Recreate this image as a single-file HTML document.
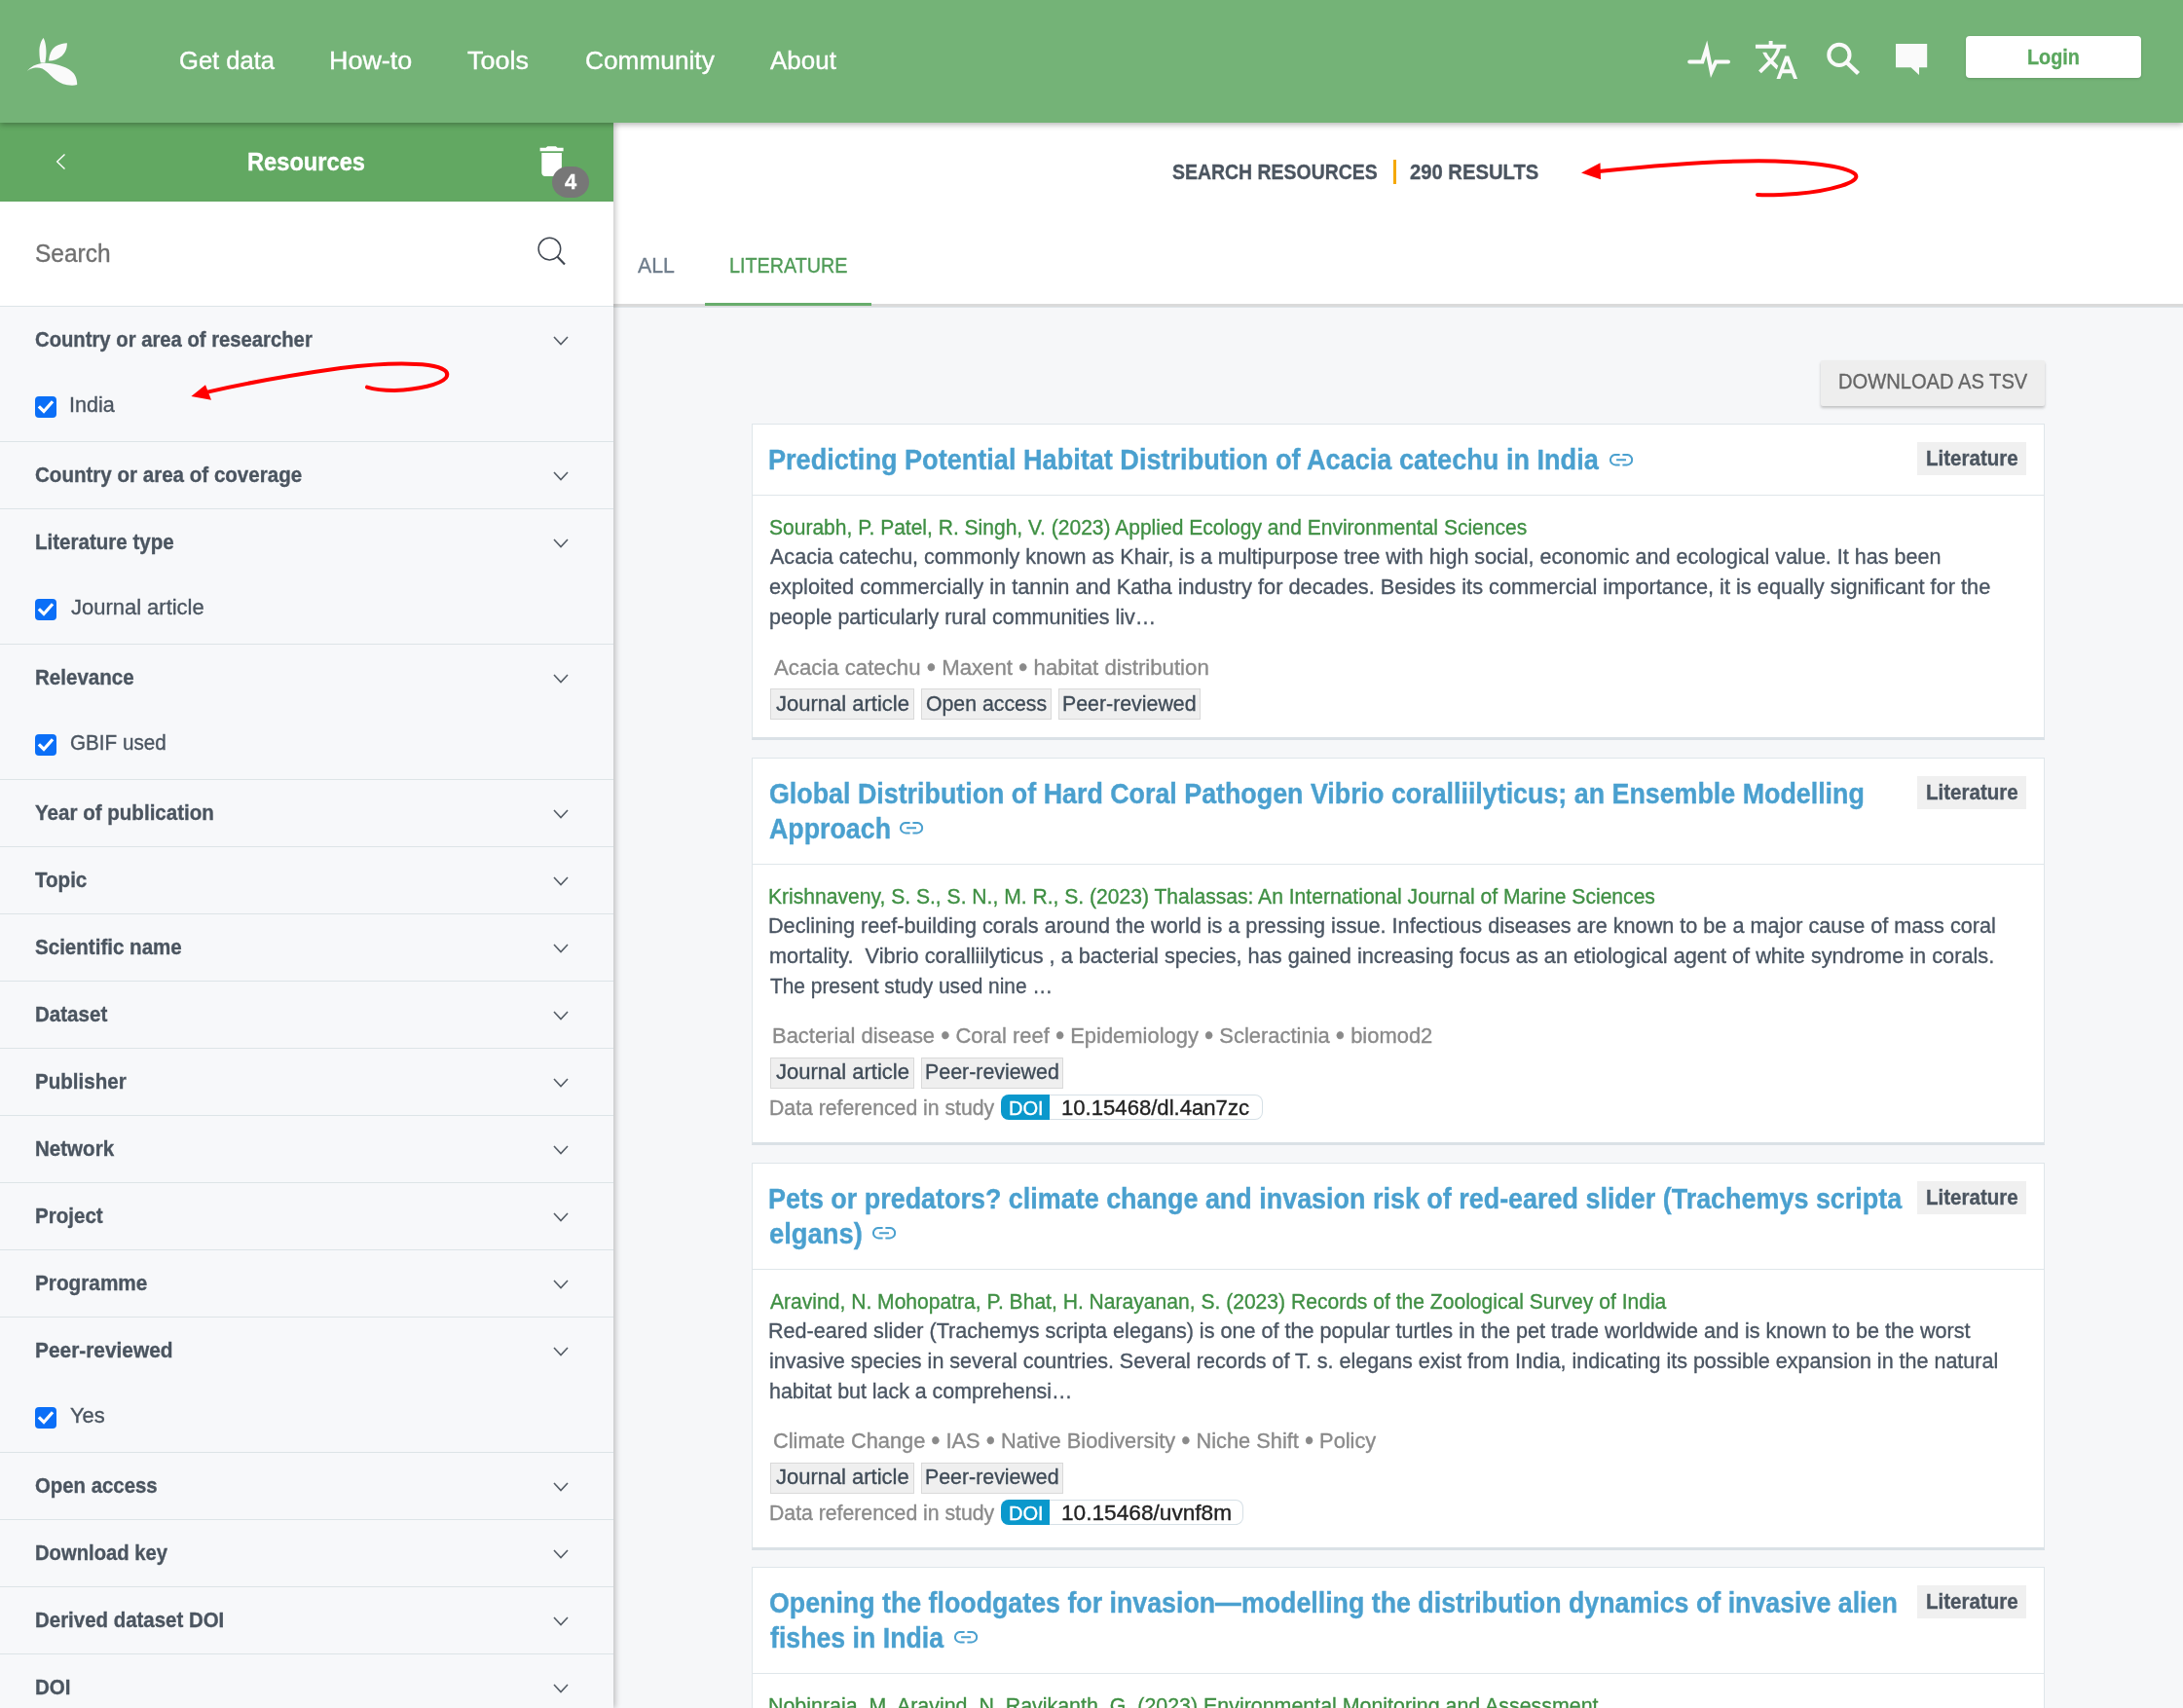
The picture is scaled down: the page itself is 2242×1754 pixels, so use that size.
<!DOCTYPE html>
<html><head><meta charset="utf-8"><style>
html,body{margin:0;padding:0}
body{width:2242px;height:1754px;position:relative;overflow:hidden;background:#f6f7f9;font-family:"Liberation Sans",sans-serif}
.abs{position:absolute}
.t{position:absolute;white-space:pre;line-height:1;transform-origin:0 0;-webkit-text-stroke:0.35px currentColor;font-family:"Liberation Sans",sans-serif}
#hdr{position:absolute;left:0;top:0;width:2242px;height:126px;background:#74b377;box-shadow:0 2px 6px rgba(0,0,0,.3);z-index:3}
#side{position:absolute;left:0;top:126px;width:630px;height:1628px;background:#f7f8fa;box-shadow:2px 0 6px rgba(0,0,0,.24);z-index:2}
#shead{position:absolute;left:0;top:126px;width:630px;height:81px;background:#62a862;z-index:2}
#ssearch{position:absolute;left:0;top:207px;width:630px;height:108px;background:#fff;border-bottom:1px solid #dde4e7;box-sizing:border-box;z-index:2}
.sec{position:absolute;left:0;width:630px;border-bottom:1px solid #dde4e7;box-sizing:border-box;z-index:2}
.chev{position:absolute;z-index:4}
.cb{position:absolute;width:21.5px;height:21.5px;border-radius:4px;background:#0b6ff7;z-index:4}
.cb svg{position:absolute;left:0;top:0}
#ctop{position:absolute;left:630px;top:126px;width:1612px;height:186px;background:#fff}
#cbar{position:absolute;left:630px;top:312px;width:1612px;height:3px;background:#dadada;border-bottom:1px solid #dde4e8}
.card{position:absolute;left:772px;width:1328px;background:#fff;border:1px solid #dfe6ea;border-bottom:3px solid #dae1e6;box-sizing:border-box}
.sep{position:absolute;left:773px;width:1326px;height:1px;background:#dfe6ea}
.badge{position:absolute;left:1969px;width:112px;height:34px;background:#f0f0f0}
.tag{position:absolute;height:32px;background:#efefef;border:1px solid #d9d9d9;box-sizing:border-box}
.doib{position:absolute;left:1028px;width:50px;height:26.5px;background:#0a98cc;border-radius:8px 0 0 8px}
.doiv{position:absolute;left:1078px;height:26.5px;border:1px solid #d6e0e6;border-left:none;border-radius:0 8px 8px 0;box-sizing:border-box;background:#fff}
#dl{position:absolute;left:1870px;top:370px;width:230px;height:47px;background:#eeeeee;box-shadow:0 2px 3px rgba(0,0,0,.22);border-radius:2px}
#login{position:absolute;left:2019px;top:37px;width:180px;height:43px;background:#fff;border-radius:4px;box-shadow:0 1px 3px rgba(0,0,0,.15)}
.z{z-index:5}
</style></head><body>
<div id="hdr">
<svg class="abs" style="left:0;top:0" width="100" height="100" viewBox="0 0 100 100">
<path fill="#fafafa" d="M44.4 39.1 C42.3 42 40.4 47 40.4 53 C40.4 58.5 41.2 62 41.7 64.6 L46.3 64.6 C47.2 60 47.6 56 47.4 52 C47.2 46 46 41 44.4 39.1 Z"/>
<path fill="#fafafa" d="M68.9 44.3 C61 44.8 56 47.5 53.3 51.5 C51 55 50.4 59 50.1 62.5 C55 62.5 60 60.5 63.5 57.5 C67.5 54 68.9 49 68.9 44.3 Z"/>
<path fill="#fafafa" d="M27.6 72.9 C31.5 68.5 37 65.8 42.8 65 C50 64.3 58 66 65.7 68.8 C71 70.8 75.5 74 77.5 78.5 C78.8 81.5 79.3 84.5 79.2 87.1 C76.5 87.8 73 87.9 69 87.3 C63 86.3 58.5 83.5 55 80.3 C51 76.5 47.5 72.5 43.6 70.4 C39.5 68.8 35 69.2 31.5 70.8 C30 71.5 28.8 72.2 27.6 72.9 Z"/>
</svg>

<svg class="abs" style="left:1730px;top:38px" width="52" height="46" viewBox="1730 38 52 46"><path d="M1735.2 63.5 H1748.3 L1752.8 49.5 L1757.7 73.5 L1762.2 63.5 H1775" fill="none" stroke="#fafafa" stroke-width="4" stroke-linecap="round" stroke-linejoin="miter" stroke-miterlimit="30"/></svg>
<svg class="abs" style="left:1800.75px;top:38px" width="47" height="47" viewBox="0 0 24 24"><path fill="#fafafa" d="M12.87 15.07l-2.54-2.51.03-.03c1.74-1.94 2.98-4.17 3.71-6.53H17V4h-7V2H8v2H1v1.99h11.17C11.5 7.92 10.44 9.75 9 11.35 8.07 10.32 7.3 9.19 6.69 8h-2c.73 1.63 1.73 3.17 2.98 4.56l-5.09 5.02L4 19l5-5 3.11 3.11.76-2.04zM18.5 10h-2L12 22h2l1.12-3h4.75L21 22h2l-4.5-12zm-2.62 7l1.62-4.33L19.12 17h-3.24z"/></svg>
<svg class="abs" style="left:1870px;top:38px" width="46" height="46" viewBox="1870 38 46 46"><circle cx="1888.9" cy="56.45" r="10.6" fill="none" stroke="#fafafa" stroke-width="4"/><path d="M1896.5 64 L1908.5 75.5" stroke="#fafafa" stroke-width="4.4"/></svg>
<svg class="abs" style="left:1940px;top:40px" width="46" height="42" viewBox="1940 40 46 42"><path fill="#fafafa" d="M1947 45.1 H1979.2 V69.3 H1971 V77.1 L1962.6 69.3 H1947 Z"/></svg>
<div id="login"></div>
</div>
<div id="side"></div>
<div id="shead"></div>
<div id="ssearch"></div>
<svg class="abs z" style="left:50px;top:150px" width="30" height="30" viewBox="50 150 30 30"><path d="M66.5 158.5 L58.7 166 L66.5 173.5" fill="none" stroke="#fff" stroke-width="1.4"/></svg>
<svg class="abs z" style="left:546.3px;top:145.4px" width="41.2" height="41.2" viewBox="0 0 24 24"><path fill="#fff" d="M6 19c0 1.1.9 2 2 2h8c1.1 0 2-.9 2-2V7H6v12zM19 4h-3.5l-1-1h-5l-1 1H5v2h14V4z"/></svg>
<div class="abs z" style="left:567px;top:171px;width:38px;height:32px;border-radius:16px;background:#777777"></div>
<svg class="abs z" style="left:545px;top:235px" width="45" height="45" viewBox="545 235 45 45"><circle cx="564.4" cy="255.6" r="11.3" fill="none" stroke="#3f4650" stroke-width="1.5"/><path d="M572.3 263.6 L580 271.4" stroke="#3f4650" stroke-width="2.2"/></svg>
<div id="sidesecs"><div class="sec" style="top:315px;height:139px"></div>
<svg class="chev" style="left:568px;top:345px" width="16" height="10" viewBox="0 0 16 10"><path d="M1 1 L8 8.5 L15 1" fill="none" stroke="#555d66" stroke-width="1.6"/></svg>
<div class="cb" style="left:36px;top:407px"><svg width="22" height="22" viewBox="0 0 22 22"><path d="M5 11.5 L9 15.5 L17 6.5" fill="none" stroke="#fff" stroke-width="3.2" stroke-linecap="square"/></svg></div>
<div class="sec" style="top:454px;height:69px"></div>
<svg class="chev" style="left:568px;top:484px" width="16" height="10" viewBox="0 0 16 10"><path d="M1 1 L8 8.5 L15 1" fill="none" stroke="#555d66" stroke-width="1.6"/></svg>
<div class="sec" style="top:523px;height:139px"></div>
<svg class="chev" style="left:568px;top:553px" width="16" height="10" viewBox="0 0 16 10"><path d="M1 1 L8 8.5 L15 1" fill="none" stroke="#555d66" stroke-width="1.6"/></svg>
<div class="cb" style="left:36px;top:615px"><svg width="22" height="22" viewBox="0 0 22 22"><path d="M5 11.5 L9 15.5 L17 6.5" fill="none" stroke="#fff" stroke-width="3.2" stroke-linecap="square"/></svg></div>
<div class="sec" style="top:662px;height:139px"></div>
<svg class="chev" style="left:568px;top:692px" width="16" height="10" viewBox="0 0 16 10"><path d="M1 1 L8 8.5 L15 1" fill="none" stroke="#555d66" stroke-width="1.6"/></svg>
<div class="cb" style="left:36px;top:754px"><svg width="22" height="22" viewBox="0 0 22 22"><path d="M5 11.5 L9 15.5 L17 6.5" fill="none" stroke="#fff" stroke-width="3.2" stroke-linecap="square"/></svg></div>
<div class="sec" style="top:801px;height:69px"></div>
<svg class="chev" style="left:568px;top:831px" width="16" height="10" viewBox="0 0 16 10"><path d="M1 1 L8 8.5 L15 1" fill="none" stroke="#555d66" stroke-width="1.6"/></svg>
<div class="sec" style="top:870px;height:69px"></div>
<svg class="chev" style="left:568px;top:900px" width="16" height="10" viewBox="0 0 16 10"><path d="M1 1 L8 8.5 L15 1" fill="none" stroke="#555d66" stroke-width="1.6"/></svg>
<div class="sec" style="top:939px;height:69px"></div>
<svg class="chev" style="left:568px;top:969px" width="16" height="10" viewBox="0 0 16 10"><path d="M1 1 L8 8.5 L15 1" fill="none" stroke="#555d66" stroke-width="1.6"/></svg>
<div class="sec" style="top:1008px;height:69px"></div>
<svg class="chev" style="left:568px;top:1038px" width="16" height="10" viewBox="0 0 16 10"><path d="M1 1 L8 8.5 L15 1" fill="none" stroke="#555d66" stroke-width="1.6"/></svg>
<div class="sec" style="top:1077px;height:69px"></div>
<svg class="chev" style="left:568px;top:1107px" width="16" height="10" viewBox="0 0 16 10"><path d="M1 1 L8 8.5 L15 1" fill="none" stroke="#555d66" stroke-width="1.6"/></svg>
<div class="sec" style="top:1146px;height:69px"></div>
<svg class="chev" style="left:568px;top:1176px" width="16" height="10" viewBox="0 0 16 10"><path d="M1 1 L8 8.5 L15 1" fill="none" stroke="#555d66" stroke-width="1.6"/></svg>
<div class="sec" style="top:1215px;height:69px"></div>
<svg class="chev" style="left:568px;top:1245px" width="16" height="10" viewBox="0 0 16 10"><path d="M1 1 L8 8.5 L15 1" fill="none" stroke="#555d66" stroke-width="1.6"/></svg>
<div class="sec" style="top:1284px;height:69px"></div>
<svg class="chev" style="left:568px;top:1314px" width="16" height="10" viewBox="0 0 16 10"><path d="M1 1 L8 8.5 L15 1" fill="none" stroke="#555d66" stroke-width="1.6"/></svg>
<div class="sec" style="top:1353px;height:139px"></div>
<svg class="chev" style="left:568px;top:1383px" width="16" height="10" viewBox="0 0 16 10"><path d="M1 1 L8 8.5 L15 1" fill="none" stroke="#555d66" stroke-width="1.6"/></svg>
<div class="cb" style="left:36px;top:1445px"><svg width="22" height="22" viewBox="0 0 22 22"><path d="M5 11.5 L9 15.5 L17 6.5" fill="none" stroke="#fff" stroke-width="3.2" stroke-linecap="square"/></svg></div>
<div class="sec" style="top:1492px;height:69px"></div>
<svg class="chev" style="left:568px;top:1522px" width="16" height="10" viewBox="0 0 16 10"><path d="M1 1 L8 8.5 L15 1" fill="none" stroke="#555d66" stroke-width="1.6"/></svg>
<div class="sec" style="top:1561px;height:69px"></div>
<svg class="chev" style="left:568px;top:1591px" width="16" height="10" viewBox="0 0 16 10"><path d="M1 1 L8 8.5 L15 1" fill="none" stroke="#555d66" stroke-width="1.6"/></svg>
<div class="sec" style="top:1630px;height:69px"></div>
<svg class="chev" style="left:568px;top:1660px" width="16" height="10" viewBox="0 0 16 10"><path d="M1 1 L8 8.5 L15 1" fill="none" stroke="#555d66" stroke-width="1.6"/></svg>
<div class="sec" style="top:1699px;height:69px"></div>
<svg class="chev" style="left:568px;top:1729px" width="16" height="10" viewBox="0 0 16 10"><path d="M1 1 L8 8.5 L15 1" fill="none" stroke="#555d66" stroke-width="1.6"/></svg></div><div id="ctop"></div><div id="cbar"></div>
<div class="abs" style="left:1431px;top:164px;width:3px;height:25px;background:#f5a800"></div>
<div class="abs" style="left:724px;top:311px;width:171px;height:3px;background:#68ad6c"></div>
<div id="dl"></div>
<div class="card" style="top:435px;height:325px"></div>
<div class="sep" style="top:508px"></div>
<div class="badge" style="top:454.0px"></div>
<svg class="abs" style="left:1652.9px;top:465.6px" width="25" height="13" viewBox="0 0 25 13"><path d="M10.6 0.95 H6.2 A5.25 5.25 0 0 0 6.2 11.45 H10.6 M13.4 0.95 H17.9 A5.25 5.25 0 0 1 17.9 11.45 H13.4 M7.1 6.2 H17" fill="none" stroke="#4aa0cf" stroke-width="2"/></svg>
<div class="tag" style="left:791.0px;top:706.9px;width:147.8px"></div>
<div class="tag" style="left:946.0px;top:706.9px;width:133.7px"></div>
<div class="tag" style="left:1087.1px;top:706.9px;width:145.5px"></div>
<div class="card" style="top:778px;height:398px"></div>
<div class="sep" style="top:887px"></div>
<div class="badge" style="top:797.0px"></div>
<svg class="abs" style="left:924.3px;top:844.4px" width="25" height="13" viewBox="0 0 25 13"><path d="M10.6 0.95 H6.2 A5.25 5.25 0 0 0 6.2 11.45 H10.6 M13.4 0.95 H17.9 A5.25 5.25 0 0 1 17.9 11.45 H13.4 M7.1 6.2 H17" fill="none" stroke="#4aa0cf" stroke-width="2"/></svg>
<div class="tag" style="left:791.0px;top:1085.7px;width:147.7px"></div>
<div class="tag" style="left:946.0px;top:1085.7px;width:145.8px"></div>
<div class="doib" style="top:1123.9px"></div>
<div class="doiv" style="top:1123.9px;width:218.5px"></div>
<div class="card" style="top:1194px;height:398px"></div>
<div class="sep" style="top:1303px"></div>
<div class="badge" style="top:1213.0px"></div>
<svg class="abs" style="left:896.0px;top:1260.4px" width="25" height="13" viewBox="0 0 25 13"><path d="M10.6 0.95 H6.2 A5.25 5.25 0 0 0 6.2 11.45 H10.6 M13.4 0.95 H17.9 A5.25 5.25 0 0 1 17.9 11.45 H13.4 M7.1 6.2 H17" fill="none" stroke="#4aa0cf" stroke-width="2"/></svg>
<div class="tag" style="left:791.2px;top:1501.7px;width:147.5px"></div>
<div class="tag" style="left:946.2px;top:1501.7px;width:145.6px"></div>
<div class="doib" style="top:1539.9px"></div>
<div class="doiv" style="top:1539.9px;width:198.7px"></div>
<div class="card" style="top:1609px;height:195px"></div>
<div class="sep" style="top:1718px"></div>
<div class="badge" style="top:1628.0px"></div>
<svg class="abs" style="left:980.0px;top:1675.4px" width="25" height="13" viewBox="0 0 25 13"><path d="M10.6 0.95 H6.2 A5.25 5.25 0 0 0 6.2 11.45 H10.6 M13.4 0.95 H17.9 A5.25 5.25 0 0 1 17.9 11.45 H13.4 M7.1 6.2 H17" fill="none" stroke="#4aa0cf" stroke-width="2"/></svg>
<div id="texts" style="position:absolute;left:0;top:0;width:2242px;height:1754px;z-index:6;will-change:transform">
<div class="t" style="left:183.5px;top:50.0px;font-size:25.6px;font-weight:400;color:#ffffff;transform:scaleX(0.9990)">Get data</div>
<div class="t" style="left:337.9px;top:50.0px;font-size:25.6px;font-weight:400;color:#ffffff;transform:scaleX(1.0513)">How-to</div>
<div class="t" style="left:480.3px;top:50.0px;font-size:25.6px;font-weight:400;color:#ffffff;transform:scaleX(1.0525)">Tools</div>
<div class="t" style="left:600.5px;top:50.0px;font-size:25.6px;font-weight:400;color:#ffffff;transform:scaleX(1.0258)">Community</div>
<div class="t" style="left:791.0px;top:50.0px;font-size:25.6px;font-weight:400;color:#ffffff;transform:scaleX(1.0149)">About</div>
<div class="t" style="left:2082.1px;top:48.0px;font-size:22.4px;font-weight:700;color:#5aa75e;transform:scaleX(0.8847)">Login</div>
<div class="t" style="left:254.2px;top:154.2px;font-size:25.6px;font-weight:700;color:#ffffff;transform:scaleX(0.9242)">Resources</div>
<div class="t" style="left:579.8px;top:176.7px;font-size:21.5px;font-weight:700;color:#ffffff;transform:scaleX(1.0167)">4</div>
<div class="t" style="left:35.9px;top:247.8px;font-size:25.6px;font-weight:400;color:#707070;transform:scaleX(0.9557)">Search</div>
<div class="t" style="left:35.5px;top:338.0px;font-size:22.4px;font-weight:700;color:#4b5560;transform:scaleX(0.9045)">Country or area of researcher</div>
<div class="t" style="left:71.1px;top:405.3px;font-size:22.4px;font-weight:400;color:#4b5560;transform:scaleX(0.9617)">India</div>
<div class="t" style="left:35.5px;top:477.0px;font-size:22.4px;font-weight:700;color:#4b5560;transform:scaleX(0.9180)">Country or area of coverage</div>
<div class="t" style="left:35.5px;top:546.0px;font-size:22.4px;font-weight:700;color:#4b5560;transform:scaleX(0.9180)">Literature type</div>
<div class="t" style="left:73.0px;top:613.3px;font-size:22.4px;font-weight:400;color:#4b5560;transform:scaleX(0.9806)">Journal article</div>
<div class="t" style="left:35.5px;top:685.0px;font-size:22.4px;font-weight:700;color:#4b5560;transform:scaleX(0.9180)">Relevance</div>
<div class="t" style="left:72.1px;top:752.3px;font-size:22.4px;font-weight:400;color:#4b5560;transform:scaleX(0.9219)">GBIF used</div>
<div class="t" style="left:35.5px;top:824.0px;font-size:22.4px;font-weight:700;color:#4b5560;transform:scaleX(0.9180)">Year of publication</div>
<div class="t" style="left:36.4px;top:893.0px;font-size:22.4px;font-weight:700;color:#4b5560;transform:scaleX(0.9180)">Topic</div>
<div class="t" style="left:35.5px;top:962.0px;font-size:22.4px;font-weight:700;color:#4b5560;transform:scaleX(0.9180)">Scientific name</div>
<div class="t" style="left:35.5px;top:1031.0px;font-size:22.4px;font-weight:700;color:#4b5560;transform:scaleX(0.9180)">Dataset</div>
<div class="t" style="left:35.5px;top:1100.0px;font-size:22.4px;font-weight:700;color:#4b5560;transform:scaleX(0.9180)">Publisher</div>
<div class="t" style="left:35.5px;top:1169.0px;font-size:22.4px;font-weight:700;color:#4b5560;transform:scaleX(0.9180)">Network</div>
<div class="t" style="left:35.5px;top:1238.0px;font-size:22.4px;font-weight:700;color:#4b5560;transform:scaleX(0.9180)">Project</div>
<div class="t" style="left:35.5px;top:1307.0px;font-size:22.4px;font-weight:700;color:#4b5560;transform:scaleX(0.9268)">Programme</div>
<div class="t" style="left:35.5px;top:1376.0px;font-size:22.4px;font-weight:700;color:#4b5560;transform:scaleX(0.9320)">Peer-reviewed</div>
<div class="t" style="left:72.0px;top:1443.3px;font-size:22.4px;font-weight:400;color:#4b5560;transform:scaleX(0.9800)">Yes</div>
<div class="t" style="left:35.5px;top:1515.0px;font-size:22.4px;font-weight:700;color:#4b5560;transform:scaleX(0.9096)">Open access</div>
<div class="t" style="left:35.5px;top:1584.0px;font-size:22.4px;font-weight:700;color:#4b5560;transform:scaleX(0.9034)">Download key</div>
<div class="t" style="left:35.5px;top:1653.0px;font-size:22.4px;font-weight:700;color:#4b5560;transform:scaleX(0.9129)">Derived dataset DOI</div>
<div class="t" style="left:35.5px;top:1722.0px;font-size:22.4px;font-weight:700;color:#4b5560;transform:scaleX(0.9180)">DOI</div>
<div class="t" style="left:1203.8px;top:165.9px;font-size:22.4px;font-weight:700;color:#4b5560;transform:scaleX(0.8685)">SEARCH RESOURCES</div>
<div class="t" style="left:1447.5px;top:165.9px;font-size:22.4px;font-weight:700;color:#4b5560;transform:scaleX(0.9034)">290 RESULTS</div>
<div class="t" style="left:655.0px;top:262.1px;font-size:22.4px;font-weight:400;color:#6e7c8b;transform:scaleX(0.9487)">ALL</div>
<div class="t" style="left:748.6px;top:262.1px;font-size:22.4px;font-weight:400;color:#4f9b57;transform:scaleX(0.8815)">LITERATURE</div>
<div class="t" style="left:1887.6px;top:381.0px;font-size:22.4px;font-weight:400;color:#666666;transform:scaleX(0.8991)">DOWNLOAD AS TSV</div>
<div class="t" style="left:789.4px;top:457.2px;font-size:30px;font-weight:700;color:#4aa0cf;transform:scaleX(0.9033)">Predicting Potential Habitat Distribution of Acacia catechu in India</div>
<div class="t" style="left:1977.6px;top:460.0px;font-size:22.4px;font-weight:700;color:#4b5560;transform:scaleX(0.9167)">Literature</div>
<div class="t" style="left:790.3px;top:530.8px;font-size:22.4px;font-weight:400;color:#3f8f43;transform:scaleX(0.9387)">Sourabh, P. Patel, R. Singh, V. (2023) Applied Ecology and Environmental Sciences</div>
<div class="t" style="left:791.2px;top:561.4px;font-size:22.4px;font-weight:400;color:#4a5562;transform:scaleX(0.9623)">Acacia catechu, commonly known as Khair, is a multipurpose tree with high social, economic and ecological value. It has been</div>
<div class="t" style="left:790.2px;top:592.0px;font-size:22.4px;font-weight:400;color:#4a5562;transform:scaleX(0.9719)">exploited commercially in tannin and Katha industry for decades. Besides its commercial importance, it is equally significant for the</div>
<div class="t" style="left:790.2px;top:622.7px;font-size:22.4px;font-weight:400;color:#4a5562;transform:scaleX(0.9586)">people particularly rural communities liv…</div>
<div class="t" style="left:795.3px;top:674.6px;font-size:22.4px;font-weight:400;color:#8a8a8a;transform:scaleX(0.9911)">Acacia catechu <span style="font-size:1.2em;vertical-align:-0.03em;line-height:0">•</span> Maxent <span style="font-size:1.2em;vertical-align:-0.03em;line-height:0">•</span> habitat distribution</div>
<div class="t" style="left:796.6px;top:711.5px;font-size:22.4px;font-weight:400;color:#3f4b57;transform:scaleX(0.9827)">Journal article</div>
<div class="t" style="left:950.7px;top:711.5px;font-size:22.4px;font-weight:400;color:#3f4b57;transform:scaleX(0.9496)">Open access</div>
<div class="t" style="left:1090.8px;top:711.5px;font-size:22.4px;font-weight:400;color:#3f4b57;transform:scaleX(0.9525)">Peer-reviewed</div>
<div class="t" style="left:790.3px;top:800.2px;font-size:30px;font-weight:700;color:#4aa0cf;transform:scaleX(0.8942)">Global Distribution of Hard Coral Pathogen Vibrio coralliilyticus; an Ensemble Modelling</div>
<div class="t" style="left:790.3px;top:836.0px;font-size:30px;font-weight:700;color:#4aa0cf;transform:scaleX(0.8927)">Approach</div>
<div class="t" style="left:1977.6px;top:803.0px;font-size:22.4px;font-weight:700;color:#4b5560;transform:scaleX(0.9167)">Literature</div>
<div class="t" style="left:789.3px;top:909.6px;font-size:22.4px;font-weight:400;color:#3f8f43;transform:scaleX(0.9416)">Krishnaveny, S. S., S. N., M. R., S. (2023) Thalassas: An International Journal of Marine Sciences</div>
<div class="t" style="left:789.3px;top:940.2px;font-size:22.4px;font-weight:400;color:#4a5562;transform:scaleX(0.9657)">Declining reef-building corals around the world is a pressing issue. Infectious diseases are known to be a major cause of mass coral</div>
<div class="t" style="left:790.2px;top:970.8px;font-size:22.4px;font-weight:400;color:#4a5562;transform:scaleX(0.9699)">mortality.  Vibrio coralliilyticus , a bacterial species, has gained increasing focus as an etiological agent of white syndrome in corals.</div>
<div class="t" style="left:791.2px;top:1001.5px;font-size:22.4px;font-weight:400;color:#4a5562;transform:scaleX(0.9328)">The present study used nine …</div>
<div class="t" style="left:793.3px;top:1053.4px;font-size:22.4px;font-weight:400;color:#8a8a8a;transform:scaleX(0.9797)">Bacterial disease <span style="font-size:1.2em;vertical-align:-0.03em;line-height:0">•</span> Coral reef <span style="font-size:1.2em;vertical-align:-0.03em;line-height:0">•</span> Epidemiology <span style="font-size:1.2em;vertical-align:-0.03em;line-height:0">•</span> Scleractinia <span style="font-size:1.2em;vertical-align:-0.03em;line-height:0">•</span> biomod2</div>
<div class="t" style="left:796.6px;top:1090.3px;font-size:22.4px;font-weight:400;color:#3f4b57;transform:scaleX(0.9820)">Journal article</div>
<div class="t" style="left:949.7px;top:1090.3px;font-size:22.4px;font-weight:400;color:#3f4b57;transform:scaleX(0.9546)">Peer-reviewed</div>
<div class="t" style="left:789.7px;top:1126.5px;font-size:22.4px;font-weight:400;color:#8a8a8a;transform:scaleX(0.9479)">Data referenced in study</div>
<div class="t" style="left:1035.6px;top:1126.5px;font-size:21px;font-weight:400;color:#ffffff;transform:scaleX(0.9559)">DOI</div>
<div class="t" style="left:1090.2px;top:1126.5px;font-size:22.4px;font-weight:400;color:#222222;transform:scaleX(0.9876)">10.15468/dl.4an7zc</div>
<div class="t" style="left:789.4px;top:1216.2px;font-size:30px;font-weight:700;color:#4aa0cf;transform:scaleX(0.8975)">Pets or predators? climate change and invasion risk of red-eared slider (Trachemys scripta</div>
<div class="t" style="left:790.3px;top:1252.0px;font-size:30px;font-weight:700;color:#4aa0cf;transform:scaleX(0.9126)">elgans)</div>
<div class="t" style="left:1977.6px;top:1219.0px;font-size:22.4px;font-weight:700;color:#4b5560;transform:scaleX(0.9167)">Literature</div>
<div class="t" style="left:791.2px;top:1325.6px;font-size:22.4px;font-weight:400;color:#3f8f43;transform:scaleX(0.9412)">Aravind, N. Mohopatra, P. Bhat, H. Narayanan, S. (2023) Records of the Zoological Survey of India</div>
<div class="t" style="left:789.3px;top:1356.2px;font-size:22.4px;font-weight:400;color:#4a5562;transform:scaleX(0.9636)">Red-eared slider (Trachemys scripta elegans) is one of the popular turtles in the pet trade worldwide and is known to be the worst</div>
<div class="t" style="left:790.2px;top:1386.9px;font-size:22.4px;font-weight:400;color:#4a5562;transform:scaleX(0.9607)">invasive species in several countries. Several records of T. s. elegans exist from India, indicating its possible expansion in the natural</div>
<div class="t" style="left:790.2px;top:1417.5px;font-size:22.4px;font-weight:400;color:#4a5562;transform:scaleX(0.9550)">habitat but lack a comprehensi…</div>
<div class="t" style="left:794.3px;top:1469.4px;font-size:22.4px;font-weight:400;color:#8a8a8a;transform:scaleX(0.9732)">Climate Change <span style="font-size:1.2em;vertical-align:-0.03em;line-height:0">•</span> IAS <span style="font-size:1.2em;vertical-align:-0.03em;line-height:0">•</span> Native Biodiversity <span style="font-size:1.2em;vertical-align:-0.03em;line-height:0">•</span> Niche Shift <span style="font-size:1.2em;vertical-align:-0.03em;line-height:0">•</span> Policy</div>
<div class="t" style="left:796.9px;top:1506.3px;font-size:22.4px;font-weight:400;color:#3f4b57;transform:scaleX(0.9802)">Journal article</div>
<div class="t" style="left:949.9px;top:1506.3px;font-size:22.4px;font-weight:400;color:#3f4b57;transform:scaleX(0.9532)">Peer-reviewed</div>
<div class="t" style="left:789.7px;top:1542.5px;font-size:22.4px;font-weight:400;color:#8a8a8a;transform:scaleX(0.9479)">Data referenced in study</div>
<div class="t" style="left:1035.6px;top:1542.5px;font-size:21px;font-weight:400;color:#ffffff;transform:scaleX(0.9559)">DOI</div>
<div class="t" style="left:1090.2px;top:1542.5px;font-size:22.4px;font-weight:400;color:#222222;transform:scaleX(1.0118)">10.15468/uvnf8m</div>
<div class="t" style="left:790.3px;top:1631.2px;font-size:30px;font-weight:700;color:#4aa0cf;transform:scaleX(0.8924)">Opening the floodgates for invasion—modelling the distribution dynamics of invasive alien</div>
<div class="t" style="left:791.2px;top:1667.0px;font-size:30px;font-weight:700;color:#4aa0cf;transform:scaleX(0.8900)">fishes in India</div>
<div class="t" style="left:1977.6px;top:1634.0px;font-size:22.4px;font-weight:700;color:#4b5560;transform:scaleX(0.9167)">Literature</div>
<div class="t" style="left:789.3px;top:1740.6px;font-size:22.4px;font-weight:400;color:#3f8f43;transform:scaleX(0.9554)">Nobinraja, M. Aravind, N. Ravikanth, G. (2023) Environmental Monitoring and Assessment</div>
</div>
<svg class="abs" style="left:0;top:0;z-index:10" width="2242" height="1754" viewBox="0 0 2242 1754">
<path d="M1642 176 C1700 170 1760 165.5 1806 165.3 C1850 165.5 1895 170 1905.5 179 C1912 187 1880 196 1845 199 C1825 200.5 1812 200.5 1805 200" fill="none" stroke="#ff0000" stroke-width="4" stroke-linecap="round"/>
<path d="M1624 177.4 L1643.5 167.2 L1644 184.2 Z" fill="#ff0000"/>
<path d="M213 402.6 C250 394 300 385 350 378 C390 373 420 372.5 440 375 C456 377.5 462 382 458 388 C452 395 430 400 405 401 C392 401 383 399.5 377 397.6" fill="none" stroke="#ff0000" stroke-width="4" stroke-linecap="round"/>
<path d="M196.4 407 L211 395.3 L217 410.8 Z" fill="#ff0000"/>
</svg>
</body></html>
